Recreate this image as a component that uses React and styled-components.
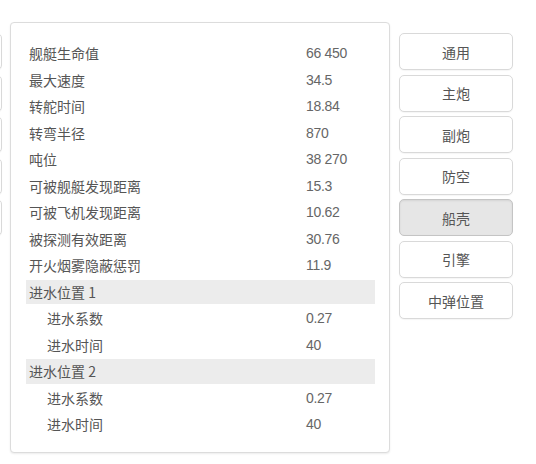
import React from "react"
import styled, { createGlobalStyle } from "styled-components"

const GlobalStyle = createGlobalStyle`
  body {
    margin: 0;
    background: #fff;
    font-family: "Liberation Sans", "Noto Sans CJK SC", sans-serif;
  }
`

const Page = styled.div`
  display: flex;
  align-items: flex-start;
  gap: 8px;
  padding-top: 22px;
  width: 536px;
  height: 464px;
  overflow: hidden;
  box-sizing: border-box;
`

const ButtonColumn = styled.div`
  flex: 0 0 114px;
  display: flex;
  flex-direction: column;
  gap: 4.5px;
  margin-top: 11px;
  margin-left: ${props => (props.offscreen ? "-112px" : "1px")};
`

const TabButton = styled.button`
  height: 37px;
  width: 114px;
  box-sizing: border-box;
  border: 1px solid ${props => (props.active ? "#c4c4c4" : "#d9d9d9")};
  border-radius: 5px;
  background: ${props => (props.active ? "#e6e6e6" : "#fff")};
  box-shadow: ${props =>
    props.active ? "inset 0 1px 2px rgba(0,0,0,0.08)" : "0 1px 1px rgba(0,0,0,0.04)"};
  color: #555;
  font-family: "Noto Sans CJK SC", sans-serif;
  font-size: 14px;
  padding: 0;
`

const Panel = styled.div`
  flex: 0 0 380px;
  box-sizing: border-box;
  height: 431px;
  border: 1px solid #dcdcdc;
  border-radius: 4px;
  box-shadow: 0 1px 2px rgba(0, 0, 0, 0.08);
  padding: 18px 14px 0 15px;
  background: #fff;
`

const Row = styled.div`
  display: flex;
  align-items: center;
  height: 24.5px;
  margin-bottom: 2px;
  padding-left: ${props => (props.indent ? "21px" : "3px")};
  background: ${props => (props.band ? "#ececec" : "transparent")};
  color: #555;
  font-size: 14px;
`

const Label = styled.span`
  flex: 0 0 ${props => (props.indent ? "259px" : "277px")};
  font-family: "Noto Sans CJK SC", sans-serif;
`

const Value = styled.span`
  font-family: "Liberation Sans", sans-serif;
  letter-spacing: -0.3px;
  color: #666;
`

const rows = [
  { label: "舰艇生命值", value: "66 450" },
  { label: "最大速度", value: "34.5" },
  { label: "转舵时间", value: "18.84" },
  { label: "转弯半径", value: "870" },
  { label: "吨位", value: "38 270" },
  { label: "可被舰艇发现距离", value: "15.3" },
  { label: "可被飞机发现距离", value: "10.62" },
  { label: "被探测有效距离", value: "30.76" },
  { label: "开火烟雾隐蔽惩罚", value: "11.9" },
  { label: "进水位置 1", band: true },
  { label: "进水系数", value: "0.27", indent: true },
  { label: "进水时间", value: "40", indent: true },
  { label: "进水位置 2", band: true },
  { label: "进水系数", value: "0.27", indent: true },
  { label: "进水时间", value: "40", indent: true },
]

const tabs = ["通用", "主炮", "副炮", "防空", "船壳", "引擎", "中弹位置"]

const App = () => {
  return (
    <>
      <GlobalStyle />
      <Page>
        <ButtonColumn offscreen aria-hidden="true">
          {[0, 1, 2, 3, 4].map(i => (
            <TabButton key={i} tabIndex={-1} />
          ))}
        </ButtonColumn>
        <Panel>
          {rows.map((r, i) => (
            <Row key={i} band={r.band} indent={r.indent}>
              <Label indent={r.indent}>{r.label}</Label>
              {r.value && <Value>{r.value}</Value>}
            </Row>
          ))}
        </Panel>
        <ButtonColumn>
          {tabs.map(t => (
            <TabButton key={t} active={t === "船壳"}>
              {t}
            </TabButton>
          ))}
        </ButtonColumn>
      </Page>
    </>
  )
}

export default App
